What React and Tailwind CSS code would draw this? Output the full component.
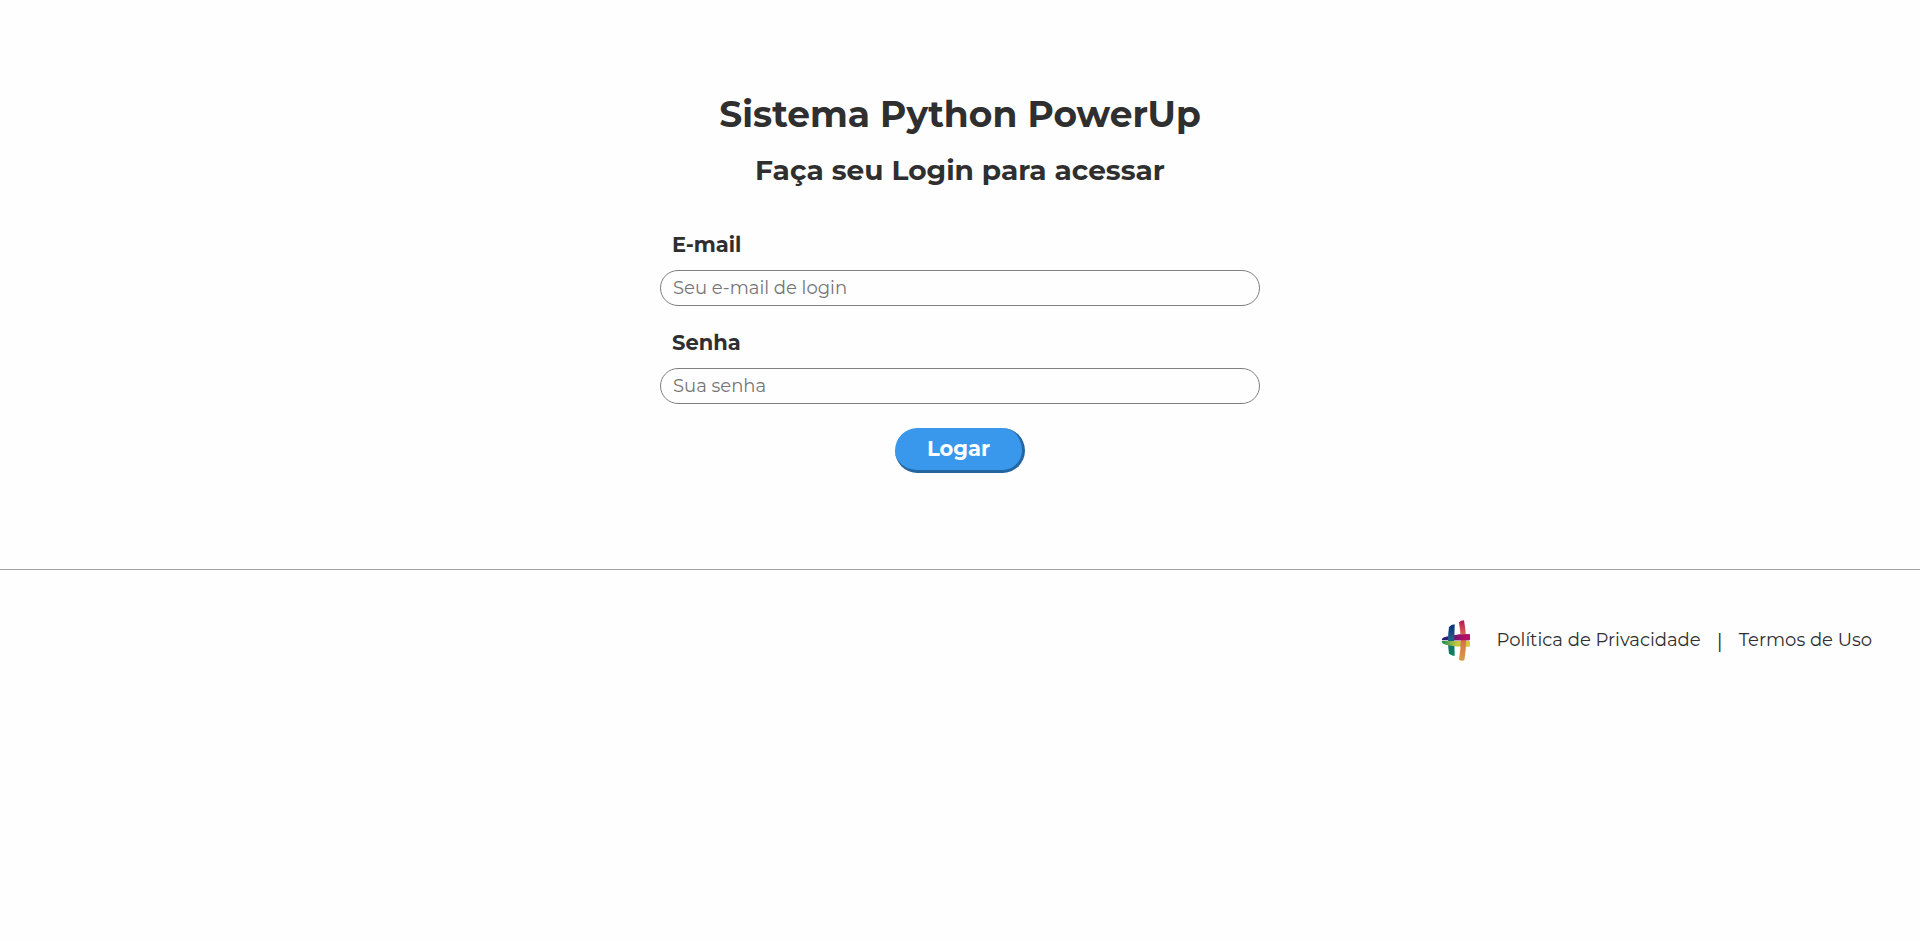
function Logo() {
  return (
    <svg className="h-[42px] w-[29px] shrink-0" viewBox="0 0 87 126">
      <defs>
        <linearGradient id="blueGreen" x1="0" y1="0" x2="0" y2="1">
          <stop offset="0" stopColor="#0b2a78" />
          <stop offset="0.45" stopColor="#1d6189" />
          <stop offset="1" stopColor="#0b8456" />
        </linearGradient>
        <linearGradient id="pinkOrange" x1="0" y1="0" x2="0" y2="1">
          <stop offset="0" stopColor="#bb0f53" />
          <stop offset="0.3" stopColor="#d0604e" />
          <stop offset="1" stopColor="#db9b45" />
        </linearGradient>
        <linearGradient id="navyPink" gradientUnits="userSpaceOnUse" x1="0" y1="0" x2="87" y2="0">
          <stop offset="0" stopColor="#0d1f77" />
          <stop offset="0.45" stopColor="#6f1472" />
          <stop offset="0.75" stopColor="#a81068" />
          <stop offset="1" stopColor="#bb1062" />
        </linearGradient>
        <linearGradient id="greenYellow" x1="0" y1="0" x2="1" y2="0">
          <stop offset="0" stopColor="#058a4c" />
          <stop offset="0.3" stopColor="#7fb04a" />
          <stop offset="0.55" stopColor="#c4c83c" />
          <stop offset="1" stopColor="#dcc93a" />
        </linearGradient>
      </defs>
      <path fill="url(#navyPink)" d="M3 60C2 54 8 52 22 49C42 44 62 43 85 43Q87 43 87 46V58Q87 61 84 61H4Z" />
      <path fill="url(#blueGreen)" d="M24 21Q31 14 41 13Q39 61 41 108Q31 107 24 101Q18 61 24 21Z" />
      <path fill="url(#greenYellow)" d="M4 63H84Q87 63 87 66V77Q87 80 84 80C58 80 34 79 14 74Q3 71 2 66Z" />
      <path fill="url(#pinkOrange)" d="M54 7Q60 1 69 1Q81 62 70 121Q60 124 54 119Q64 62 54 7Z" />
      <path fill="url(#navyPink)" d="M41 46C58 43 70 43 85 43Q87 43 87 46V58Q87 61 84 61H41Z" />
    </svg>
  );
}

function Field({ id, label, type, placeholder }) {
  return (
    <div className="flex flex-col">
      <label htmlFor={id} className="mb-3 ml-3 text-[21px] leading-[26px] font-bold">
        {label}
      </label>
      <input
        id={id}
        type={type}
        placeholder={placeholder}
        className="h-9 w-full rounded-[18px] border border-[#808080] bg-transparent px-3 text-[18px] leading-[22px] font-normal placeholder:text-[#757575]"
      />
    </div>
  );
}

export default function App() {
  return (
    <div className="min-h-screen bg-[#fefefe] font-['Montserrat','Inter',sans-serif] text-[#2f2f2f]">
      <main className="mx-auto flex w-[600px] flex-col items-center pt-[92px]">
        <h1 className="text-[36px] leading-[44px] font-bold">Sistema Python PowerUp</h1>
        <h2 className="mt-[17px] text-[28px] leading-[34px] font-bold">Faça seu Login para acessar</h2>
        <form className="mt-[45px] flex w-full flex-col gap-6">
          <Field id="email" label="E-mail" type="email" placeholder="Seu e-mail de login" />
          <Field id="senha" label="Senha" type="password" placeholder="Sua senha" />
          <button
            type="button"
            className="flex h-[45px] w-[130px] items-center justify-center self-center rounded-[25px] border-r-[3px] border-b-[3px] border-[#2565a0] bg-[#3998ec] text-[21px] font-bold text-white"
          >
            Logar
          </button>
        </form>
      </main>
      <footer className="mt-24 flex items-center justify-end border-t border-[#a3a3a3] pt-[50px] pr-12">
        <Logo />
        <div className="ml-[27px] flex h-6 text-[18px] leading-[22px]">
          <a>Política de Privacidade</a>
          <span className="w-[38px] pt-px text-center text-[20px]">|</span>
          <a>Termos de Uso</a>
        </div>
      </footer>
    </div>
  );
}
